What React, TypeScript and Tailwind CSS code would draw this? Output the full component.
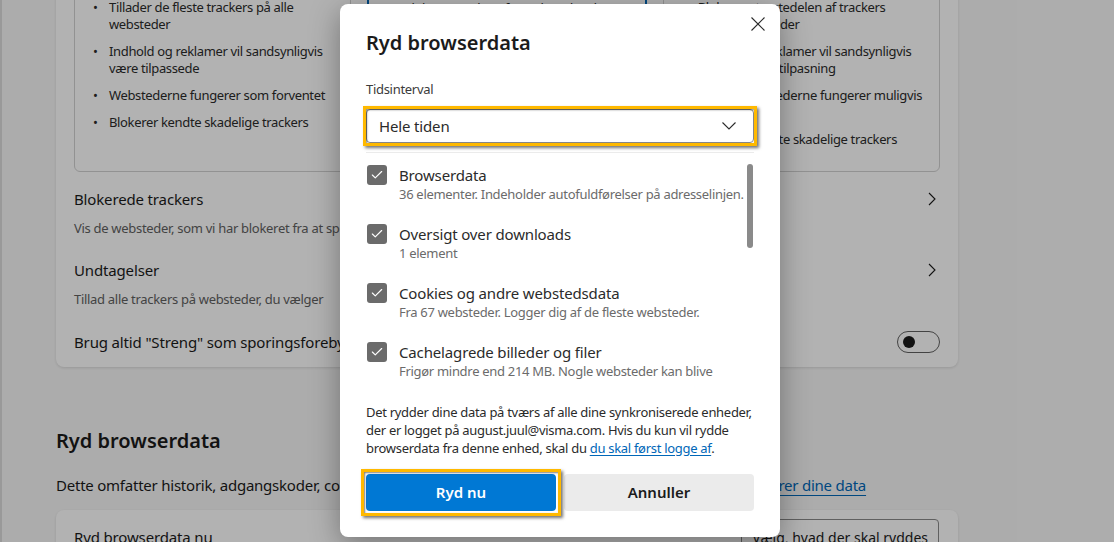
import { Check } from "lucide-react";

const basic = [
  ["Tillader de fleste trackers på alle", "websteder"],
  ["Indhold og reklamer vil sandsynligvis", "være tilpassede"],
  ["Webstederne fungerer som forventet"],
  ["Blokerer kendte skadelige trackers"],
];

const balanced = [
  ["Blokerer trackers fra websteder, du", "ikke har besøgt"],
  ["Indhold og reklamer vil sandsynligvis", "være mindre tilpassede"],
  ["Webstederne fungerer som forventet"],
  ["Blokerer kendte skadelige trackers"],
];

const strict = [
  ["Blokerer størstedelen af trackers", "på alle websteder"],
  ["Indhold og reklamer vil sandsynligvis", "have minimal tilpasning"],
  ["Dele af webstederne fungerer muligvis", "ikke"],
  ["Blokerer kendte skadelige trackers"],
];

const items = [
  { title: "Browserdata", sub: "36 elementer. Indeholder autofuldførelser på adresselinjen." },
  { title: "Oversigt over downloads", sub: "1 element" },
  { title: "Cookies og andre webstedsdata", sub: "Fra 67 websteder. Logger dig af de fleste websteder." },
  { title: "Cachelagrede billeder og filer", sub: "Frigør mindre end 214 MB. Nogle websteder kan blive" },
];

function OptionBox({ lines, selected }: { lines: string[][]; selected?: boolean }) {
  return (
    <div
      className={`flex-1 rounded-md pt-[78px] pb-[23px] pl-[18px] ${
        selected ? "border-2 border-[#0067b8]" : "border border-[#d1d1d1]"
      }`}
    >
      <ul className="space-y-[10px] text-[13px] leading-[17px] tracking-[-0.35px] text-[#2b2b2b]">
        {lines.map((l, i) => (
          <li key={i} className="flex">
            <span className="w-4 shrink-0">•</span>
            <span className="whitespace-nowrap">
              {l[0]}
              {l[1] && (
                <>
                  <br />
                  {l[1]}
                </>
              )}
            </span>
          </li>
        ))}
      </ul>
    </div>
  );
}

function Chevron() {
  return (
    <svg width="16" height="20" viewBox="0 0 16 20" fill="none" className="text-[#1b1b1b]">
      <path d="M5 4l6 6-6 6" stroke="currentColor" strokeWidth="1.1" />
    </svg>
  );
}

function Row({ title, sub }: { title: string; sub: string }) {
  return (
    <div className="flex items-start justify-between">
      <div>
        <div className="text-[15px] leading-5 tracking-[-0.15px] text-[#1b1b1b]">{title}</div>
        <div className="mt-[10px] text-[13px] leading-[18px] tracking-[-0.3px] text-[#616161]">{sub}</div>
      </div>
      <Chevron />
    </div>
  );
}

export default function App() {
  return (
    <div className="relative h-[542px] w-[1114px] overflow-hidden bg-[#f7f7f7] font-['Segoe_UI','Noto_Sans',sans-serif]">
      {/* settings page behind the dialog */}
      <div className="flex h-full flex-col border-l-2 border-[#dcdcdc]">
        <div className="ml-[54px] w-[902px]">
          <div className="-mt-[96px] rounded-lg bg-white px-[18px] pt-4 pb-[14px] shadow-[0_1px_3px_rgba(0,0,0,0.12)]">
            <div className="flex gap-4">
              <OptionBox lines={basic} />
              <OptionBox lines={balanced} selected />
              <OptionBox lines={strict} />
            </div>
            <div className="mt-[17px] space-y-[23px]">
              <Row title="Blokerede trackers" sub="Vis de websteder, som vi har blokeret fra at spore dig" />
              <Row title="Undtagelser" sub="Tillad alle trackers på websteder, du vælger" />
              <div className="flex items-center justify-between">
                <div className="text-[15px] leading-5 tracking-[-0.15px] text-[#1b1b1b]">
                  Brug altid "Streng" som sporingsforebyggelse, når du browser som InPrivate
                </div>
                <div className="flex h-[22px] w-[43px] items-center rounded-full border border-[#616161] bg-white px-[5px]">
                  <div className="h-[12px] w-[12px] rounded-full bg-[#1b1b1b]" />
                </div>
              </div>
            </div>
          </div>

          <h2 className="mt-[60px] text-[20px] font-semibold leading-7 text-[#1b1b1b]">Ryd browserdata</h2>
          <p className="mt-5 whitespace-nowrap text-[15px] leading-5 tracking-[-0.23px] text-[#1b1b1b]">
            Dette omfatter historik, adgangskoder, cookies og meget mere. Kun data fra denne profil slettes.{" "}
            <span className="text-[#0067b8] underline underline-offset-4">Administrer dine data</span>
          </p>
          <div className="mt-[15px] flex items-center justify-between rounded-lg bg-white py-[9px] pl-[18px] pr-[19px] shadow-[0_1px_3px_rgba(0,0,0,0.12)]">
            <div className="text-[15px] leading-5 tracking-[-0.15px] text-[#1b1b1b]">Ryd browserdata nu</div>
            <div className="flex h-9 items-center rounded border border-[#8a8a8a] px-[10px] text-[14px] text-[#1b1b1b]">
              Vælg, hvad der skal ryddes
            </div>
          </div>
        </div>
      </div>

      {/* dim overlay */}
      <div className="absolute inset-0 bg-black/30" />

      {/* dialog */}
      <div className="absolute left-[340px] top-[4px] h-[533px] w-[440px] rounded-lg bg-white px-[26px] pt-[25px] shadow-[0_8px_30px_rgba(0,0,0,0.35)]">
        <button className="absolute right-[8px] top-[6px] flex h-7 w-7 items-center justify-center text-[#2b2b2b]">
          <svg width="14" height="14" viewBox="0 0 14 14" fill="none">
            <path d="M0.5 0.5l13 13M13.5 0.5l-13 13" stroke="currentColor" strokeWidth="1.1" />
          </svg>
        </button>
        <h1 className="text-[20px] font-semibold leading-7 text-[#1b1b1b]">Ryd browserdata</h1>
        <div className="mt-[23px] text-[13px] leading-[18px] tracking-[-0.3px] text-[#3b3b3b]">Tidsinterval</div>

        <div className="relative mt-[11px]">
          <div className="flex h-[34px] items-center justify-between rounded border border-[#8a8a8a] bg-white pl-3 pr-[17px] text-[15px] tracking-[-0.15px] text-[#2b2b2b]">
            Hele tiden
            <svg width="14" height="8" viewBox="0 0 14 8" fill="none">
              <path d="M0.5 0.5l6.5 6.5 6.5-6.5" stroke="currentColor" strokeWidth="1.1" />
            </svg>
          </div>
          <div className="absolute -inset-[3px] border-[3px] border-[#ffb900] shadow-[2px_2px_3px_rgba(0,0,0,0.55),inset_1px_1px_2px_rgba(0,0,0,0.45)]" />
        </div>

        <div className="relative mt-[9px] h-[234px] overflow-hidden border-t border-[#ebebeb] pt-3">
          <div className="space-y-[21px]">
            {items.map((it) => (
              <div key={it.title} className="flex items-start gap-3">
                <div className="ml-px flex h-5 w-5 shrink-0 items-center justify-center rounded-[3px] bg-[#6b6b6b]">
                  <Check className="h-[14px] w-[14px] text-white" strokeWidth={2} />
                </div>
                <div>
                  <div className="text-[15px] leading-5 tracking-[-0.15px] text-[#2b2b2b]">{it.title}</div>
                  <div className="whitespace-nowrap text-[13px] leading-[18px] tracking-[-0.3px] text-[#6b6b6b]">{it.sub}</div>
                </div>
              </div>
            ))}
            <div className="h-10" />
          </div>
          <div className="absolute right-px top-[11px] h-[84px] w-[6px] rounded-full bg-[#8a8a8a]" />
        </div>

        <p className="mt-[17px] whitespace-nowrap text-[13px] leading-[18px] tracking-[-0.3px] text-[#2b2b2b]">
          Det rydder dine data på tværs af alle dine synkroniserede enheder,
          <br />
          der er logget på august.juul@visma.com. Hvis du kun vil rydde
          <br />
          browserdata fra denne enhed, skal du{" "}
          <span className="text-[#0067b8] underline underline-offset-2">du skal først logge af</span>.
        </p>

        <div className="mt-[17px] flex gap-2">
          <div className="relative flex-1">
            <button className="h-[37px] w-full rounded bg-[#0078d4] text-[15px] font-semibold text-white">
              Ryd nu
            </button>
            <div className="absolute -inset-[5px] border-[3px] border-[#ffb900] shadow-[2px_2px_3px_rgba(0,0,0,0.55),inset_1px_1px_2px_rgba(0,0,0,0.5)]" />
          </div>
          <button className="h-[37px] flex-1 rounded bg-[#ebebeb] text-[15px] font-semibold text-[#1b1b1b]">
            Annuller
          </button>
        </div>
      </div>
    </div>
  );
}
